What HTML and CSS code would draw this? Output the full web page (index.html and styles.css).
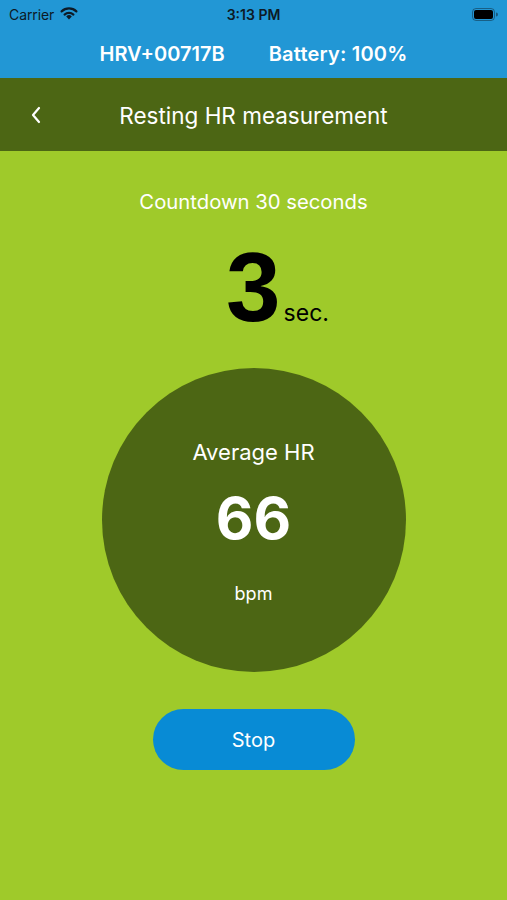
FILE: index.html
```html
<!DOCTYPE html>
<html>
<head>
<meta charset="utf-8">
<link rel="stylesheet" href="styles.css">
</head>
<body>
<div class="screen">
  <header class="top">
    <div class="status">
      <div class="status-left">
        <span class="carrier">Carrier</span>
        <svg class="wifi" width="18" height="14" viewBox="0 0 18 14">
          <path d="M9 13.5 L6.2 10.4 A4 4 0 0 1 11.8 10.4 Z" fill="#0d1a26"/>
          <path d="M4.6 8.6 A6.4 6.4 0 0 1 13.4 8.6" fill="none" stroke="#0d1a26" stroke-width="2.2" stroke-linecap="round"/>
          <path d="M1.6 5.4 A10.6 10.6 0 0 1 16.4 5.4" fill="none" stroke="#0d1a26" stroke-width="2.2" stroke-linecap="round"/>
        </svg>
      </div>
      <div class="time">3:13 PM</div>
      <div class="status-right">
        <svg class="battery" width="26" height="13" viewBox="0 0 26 13">
          <rect x="0.5" y="0.5" width="22" height="12" rx="3.5" fill="none" stroke="#0d1a26" stroke-opacity="0.45"/>
          <rect x="2" y="2" width="19" height="9" rx="2" fill="#000"/>
          <path d="M24 4.5 A2 2 0 0 1 24 8.5 Z" fill="#0d1a26" fill-opacity="0.5"/>
        </svg>
      </div>
    </div>
    <div class="device">
      <span>HRV+00717B</span>
      <span>Battery: 100%</span>
    </div>
  </header>
  <nav class="nav">
    <svg class="back" width="12" height="18" viewBox="0 0 12 18">
      <path d="M9 2 L3 9 L9 16" fill="none" stroke="#fff" stroke-width="2.2" stroke-linecap="round" stroke-linejoin="round"/>
    </svg>
    <div class="title">Resting HR measurement</div>
  </nav>
  <main class="content">
    <div class="countdown">Countdown 30 seconds</div>
    <div class="timer"><span class="num">3</span><span class="unit">sec.</span></div>
    <div class="circle">
      <div class="avg-label">Average HR</div>
      <div class="avg-value">66</div>
      <div class="avg-unit">bpm</div>
    </div>
    <button class="stop">Stop</button>
  </main>
</div>
</body>
</html>
```

FILE: styles.css
```css
html, body {
  margin: 0;
  padding: 0;
}
body {
  font-family: Inter, "Noto Sans", "Liberation Sans", sans-serif;
  background: #9fca2a;
}
.screen {
  width: 507px;
  height: 900px;
  display: flex;
  flex-direction: column;
  background: #9fca2a;
}
.top {
  background: #2297d5;
  height: 78px;
  display: flex;
  flex-direction: column;
}
.status {
  height: 28px;
  display: grid;
  grid-template-columns: 1fr auto 1fr;
  align-items: center;
  padding: 0 9px;
  color: #0d1a26;
  font-size: 14px;
}
.status-left {
  display: flex;
  align-items: center;
  gap: 6px;
}
.carrier {
  font-weight: 400;
  letter-spacing: -0.1px;
}
.wifi {
  margin-top: -2px;
}
.time {
  font-weight: 600;
}
.status-right {
  display: flex;
  justify-content: flex-end;
}
.device {
  flex: 1;
  display: flex;
  justify-content: center;
  align-items: center;
  gap: 44px;
  color: #fff;
  font-size: 20px;
  font-weight: 600;
  padding-top: 2px;
}
.device span:last-child {
  letter-spacing: 0.2px;
}
.nav {
  height: 73px;
  background: #4c6614;
  display: flex;
  align-items: center;
  position: relative;
  color: #fff;
}
.back {
  position: absolute;
  left: 30px;
  top: 28px;
}
.title {
  flex: 1;
  text-align: center;
  font-size: 22.5px;
  font-weight: 400;
  padding-top: 2px;
}
.content {
  flex: 1;
  display: flex;
  flex-direction: column;
  align-items: center;
}
.countdown {
  margin-top: 38px;
  color: #fff;
  font-size: 20.3px;
  line-height: 26px;
}
.timer {
  margin-top: 22px;
  display: flex;
  align-items: baseline;
  padding-left: 48px;
}
.num {
  font-family: "Liberation Sans", Arial, sans-serif;
  font-weight: 700;
  font-size: 98px;
  line-height: 100px;
  color: #000;
}
.unit {
  font-size: 23px;
  color: #000;
  margin-left: 3px;
}
.circle {
  margin-top: 31px;
  width: 304px;
  height: 304px;
  border-radius: 50%;
  background: #4c6614;
  display: flex;
  flex-direction: column;
  align-items: center;
  color: #fff;
}
.avg-label {
  margin-top: 70px;
  font-size: 22px;
  line-height: 28px;
}
.avg-value {
  margin-top: 17px;
  font-size: 58px;
  font-weight: 700;
  line-height: 70px;
}
.avg-unit {
  margin-top: 30px;
  font-size: 18px;
  line-height: 22px;
}
.stop {
  margin-top: 37px;
  width: 202px;
  height: 61px;
  border: none;
  border-radius: 31px;
  background: #088bd5;
  color: #fff;
  font-family: Inter, "Noto Sans", sans-serif;
  font-size: 20px;
}
```
